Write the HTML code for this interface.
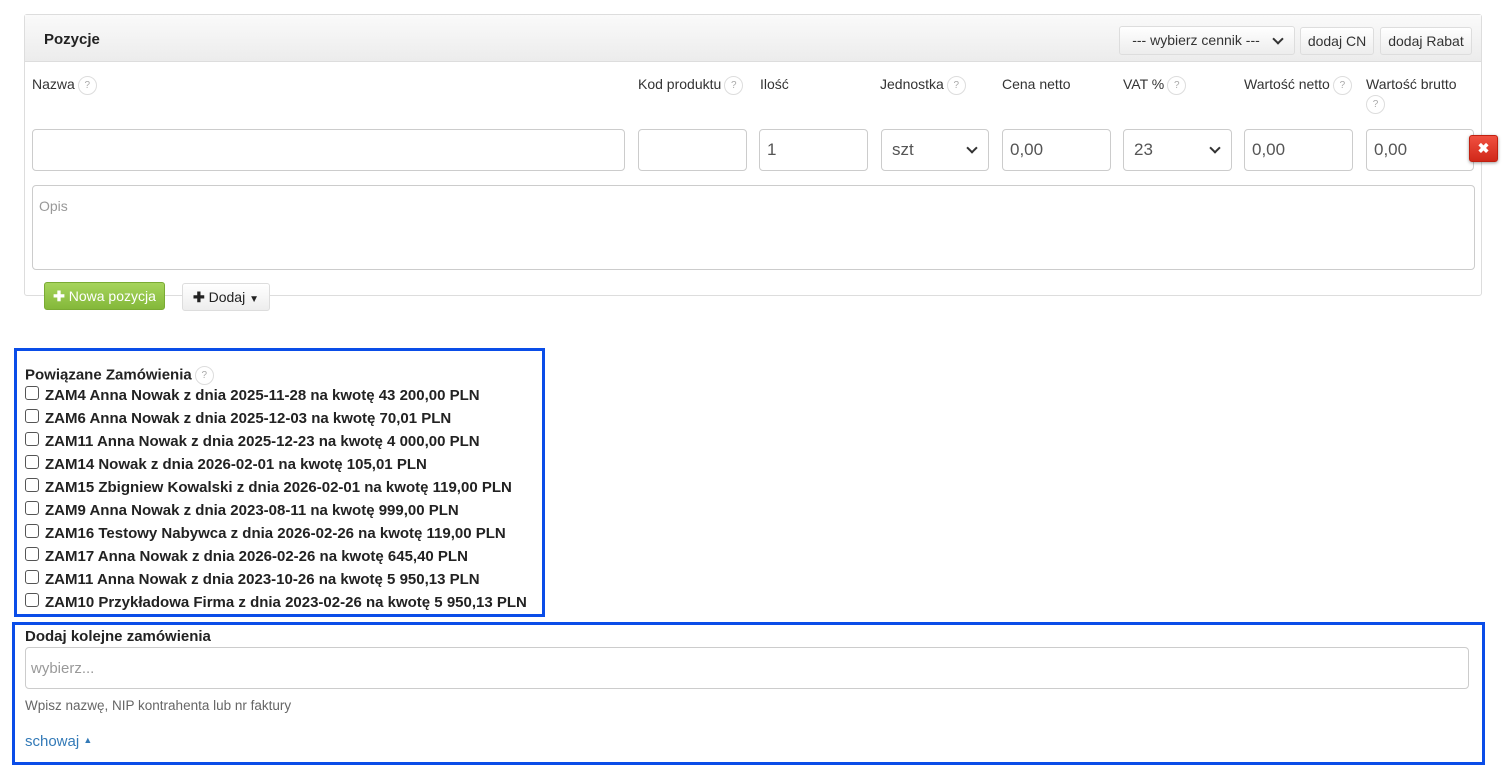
<!DOCTYPE html>
<html><head><meta charset="utf-8"><style>
*{box-sizing:border-box;margin:0;padding:0}
body{width:1512px;height:766px;background:#fff;font-family:"Liberation Sans",Arial,sans-serif;color:#333;position:relative;overflow:hidden}
.a{position:absolute}
.panel{left:24px;top:14px;width:1458px;height:282px;border:1px solid #ddd;border-radius:3px}
.hdr{left:25px;top:15px;width:1456px;height:47px;background:linear-gradient(#fafafa,#ececec);border-bottom:1px solid #ddd}
.lbl{font-size:14px;color:#333;line-height:16px;white-space:nowrap}
.q{display:inline-block;width:19px;height:19px;border:1px solid #ddd;border-radius:50%;font-size:10px;color:#aaa;text-align:center;line-height:17px;vertical-align:middle;margin-left:3px}
.inp{height:42px;border:1px solid #ccc;border-radius:4px;background:#fff;font-size:17px;color:#555;padding:11px 7px;line-height:18px}
.sel::after{content:"";position:absolute;right:12px;top:calc(50% - 6px);width:6px;height:6px;border-right:2px solid #333;border-bottom:2px solid #333;transform:rotate(45deg)}
.btn{border:1px solid #ddd;border-radius:3px;background:linear-gradient(#fff,#ededed);font-size:14px;color:#333;text-align:center}
.it{font-size:15px;font-weight:bold;color:#222;line-height:16px;white-space:nowrap}
.cb{position:absolute;left:25px;width:14px;height:14px;border:1px solid #555;border-radius:3px;background:#fff}
</style></head><body>
<div class="a panel"></div>
<div class="a hdr"></div>
<div class="a" style="left:44px;top:31px;font-size:15px;font-weight:bold;color:#222">Pozycje</div>
<div class="a btn sel" style="left:1119px;top:26px;width:176px;height:29px;line-height:27px;padding-right:22px;font-size:14px">--- wybierz cennik ---</div>
<div class="a btn" style="left:1300px;top:27px;width:74px;height:28px;line-height:26px">dodaj CN</div>
<div class="a btn" style="left:1380px;top:27px;width:92px;height:28px;line-height:26px">dodaj Rabat</div>

<div class="a lbl" style="left:32px;top:76px">Nazwa<span class="q">?</span></div>
<div class="a lbl" style="left:638px;top:76px">Kod produktu<span class="q">?</span></div>
<div class="a lbl" style="left:760px;top:76px">Ilość</div>
<div class="a lbl" style="left:880px;top:76px">Jednostka<span class="q">?</span></div>
<div class="a lbl" style="left:1002px;top:76px">Cena netto</div>
<div class="a lbl" style="left:1123px;top:76px">VAT %<span class="q">?</span></div>
<div class="a lbl" style="left:1244px;top:76px">Wartość netto<span class="q">?</span></div>
<div class="a lbl" style="left:1366px;top:76px">Wartość brutto<br><span class="q" style="margin:3px 0 0 0">?</span></div>

<div class="a inp" style="left:32px;top:129px;width:593px"></div>
<div class="a inp" style="left:638px;top:129px;width:109px"></div>
<div class="a inp" style="left:759px;top:129px;width:109px">1</div>
<div class="a inp sel" style="left:881px;top:129px;width:108px;padding-left:10px">szt</div>
<div class="a inp" style="left:1002px;top:129px;width:109px">0,00</div>
<div class="a inp sel" style="left:1123px;top:129px;width:109px;padding-left:10px">23</div>
<div class="a inp" style="left:1244px;top:129px;width:109px">0,00</div>
<div class="a inp" style="left:1366px;top:129px;width:108px">0,00</div>
<div class="a" style="left:1469px;top:135px;width:29px;height:27px;background:linear-gradient(#f05040,#d0281a);border:1px solid #c02010;border-radius:3px;box-shadow:0 1px 3px rgba(0,0,0,.4);color:#fff;font-weight:bold;font-size:14px;text-align:center;line-height:25px">✖</div>
<div class="a inp" style="left:32px;top:185px;width:1443px;height:85px;font-size:14px;color:#999;padding:11px 6px">Opis</div>

<div class="a" style="left:44px;top:282px;width:121px;height:28px;background:linear-gradient(#a6d45c,#84b83a);border:1px solid #7aab34;border-radius:3px;color:#fff;font-size:14px;line-height:26px;text-align:center"><b>✚</b> Nowa pozycja</div>
<div class="a btn" style="left:182px;top:283px;width:88px;height:28px;line-height:26px;color:#222"><b>✚</b> Dodaj <span style="font-size:10px">▼</span></div>

<div class="a" style="left:14px;top:348px;width:531px;height:269px;border:3px solid #0a4de8"></div>
<div class="a it" style="left:25px;top:366px">Powiązane Zamówienia<span class="q" style="font-weight:normal">?</span></div>
<div class="cb" style="top:386px"></div><div class="a it" style="left:45px;top:388px">ZAM4 Anna Nowak z dnia 2025-11-28 na kwotę 43 200,00 PLN</div>
<div class="cb" style="top:409px"></div><div class="a it" style="left:45px;top:411px">ZAM6 Anna Nowak z dnia 2025-12-03 na kwotę 70,01 PLN</div>
<div class="cb" style="top:432px"></div><div class="a it" style="left:45px;top:434px">ZAM11 Anna Nowak z dnia 2025-12-23 na kwotę 4 000,00 PLN</div>
<div class="cb" style="top:455px"></div><div class="a it" style="left:45px;top:457px">ZAM14 Nowak z dnia 2026-02-01 na kwotę 105,01 PLN</div>
<div class="cb" style="top:478px"></div><div class="a it" style="left:45px;top:480px">ZAM15 Zbigniew Kowalski z dnia 2026-02-01 na kwotę 119,00 PLN</div>
<div class="cb" style="top:501px"></div><div class="a it" style="left:45px;top:503px">ZAM9 Anna Nowak z dnia 2023-08-11 na kwotę 999,00 PLN</div>
<div class="cb" style="top:524px"></div><div class="a it" style="left:45px;top:526px">ZAM16 Testowy Nabywca z dnia 2026-02-26 na kwotę 119,00 PLN</div>
<div class="cb" style="top:547px"></div><div class="a it" style="left:45px;top:549px">ZAM17 Anna Nowak z dnia 2026-02-26 na kwotę 645,40 PLN</div>
<div class="cb" style="top:570px"></div><div class="a it" style="left:45px;top:572px">ZAM11 Anna Nowak z dnia 2023-10-26 na kwotę 5 950,13 PLN</div>
<div class="cb" style="top:593px"></div><div class="a it" style="left:45px;top:595px">ZAM10 Przykładowa Firma z dnia 2023-02-26 na kwotę 5 950,13 PLN</div>

<div class="a" style="left:12px;top:622px;width:1473px;height:143px;border:3px solid #0a4de8"></div>
<div class="a it" style="left:25px;top:629px">Dodaj kolejne zamówienia</div>
<div class="a inp" style="left:25px;top:647px;width:1444px;font-size:15px;color:#999;padding:12px 5px">wybierz...</div>
<div class="a" style="left:25px;top:698px;font-size:13.5px;color:#666">Wpisz nazwę, NIP kontrahenta lub nr faktury</div>
<div class="a" style="left:25px;top:733px;font-size:15px;color:#337ab7">schowaj <span style="font-size:9px;vertical-align:3px">▲</span></div>
</body></html>
